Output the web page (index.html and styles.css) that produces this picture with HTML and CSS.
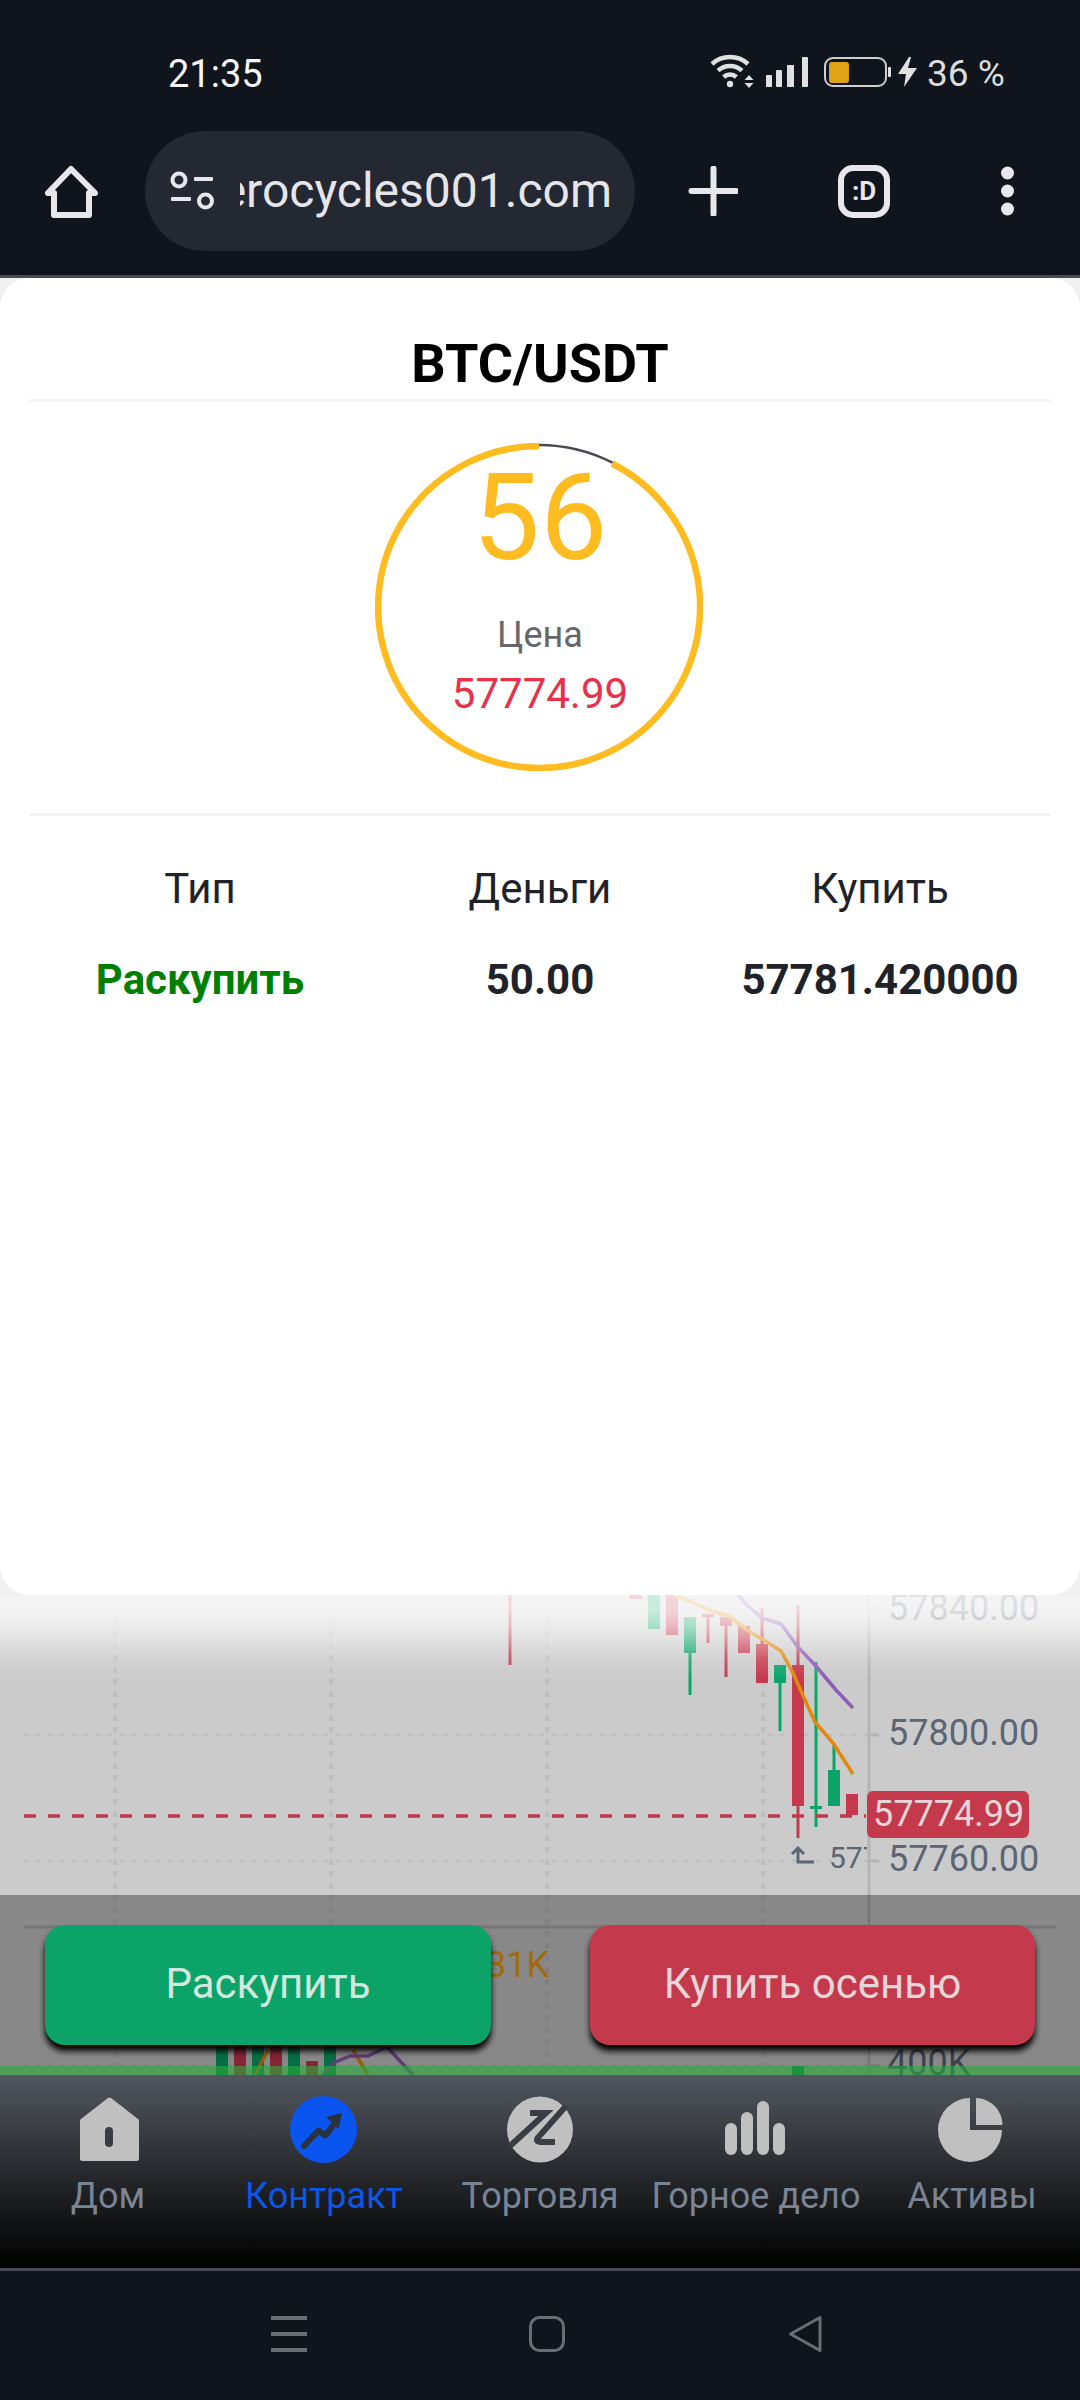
FILE: index.html
```html
<!DOCTYPE html>
<html lang="ru">
<head>
<meta charset="utf-8">
<title>BTC/USDT</title>
<link rel="stylesheet" href="styles.css">
</head>
<body>
<div class="page">
  <header class="topbar">
    <div class="status">
      <span class="time">21:35</span>
      <svg class="status-icons" viewBox="706 52 212 38" width="212" height="38">
        <g class="ic-wifi">
          <path d="M712 64A27 27 0 0 1 748 64"/>
          <path d="M718 70.6A18 18 0 0 1 742 70.6"/>
          <path d="M723.6 77A9.5 9.5 0 0 1 736.4 77"/>
        </g>
        <circle class="ic-fill" cx="730" cy="84" r="3.2"/>
        <path class="ic-fill" d="M749 75l4.5 5h-9zM749 88l4.5-5h-9z"/>
        <rect class="ic-fill" x="766" y="75" width="6" height="12" rx="1"/>
        <rect class="ic-fill" x="776" y="70" width="6" height="17" rx="1"/>
        <rect class="ic-fill" x="787" y="65" width="7" height="22" rx="1"/>
        <rect class="ic-fill" x="802" y="57" width="6" height="30" rx="1"/>
        <rect class="ic-batt" x="825" y="58" width="61" height="28" rx="8"/>
        <rect class="ic-level" x="829" y="62" width="20" height="21" rx="3"/>
        <rect class="ic-fill" x="888" y="67" width="3" height="10" rx="1"/>
        <path class="ic-fill" d="M909 57L898 74H906L904 87L917 68H908L911 57Z"/>
      </svg>
      <span class="batt-text">36 %</span>
    </div>
    <div class="browser">
      <svg class="home-btn" viewBox="43 162 56 57" width="56" height="57">
        <path class="ic-line" d="M71 168L48 192H54V214H89V192H95Z"/>
      </svg>
      <div class="url-pill">
        <svg class="tune" viewBox="168 171 50 42" width="50" height="42">
          <circle class="ic-thin" cx="179" cy="181" r="6.5"/>
          <rect class="ic-light" x="194" y="178" width="19" height="4" rx="1"/>
          <rect class="ic-light" x="171" y="198" width="20" height="4" rx="1"/>
          <circle class="ic-thin" cx="205.500" cy="202" r="6.500"/>
        </svg>
        <div class="url-clip"><span class="url-text">erocycles001.com</span></div>
      </div>
      <svg class="plus-btn" viewBox="688 166 50 50" width="50" height="50">
        <path class="ic-line" d="M691.500 191H736M713.500 168.500V214"/>
      </svg>
      <div class="tab-btn">:D</div>
      <svg class="dots-btn" viewBox="996 164 24 54" width="24" height="54">
        <circle class="ic-light" cx="1007.500" cy="173" r="6.500"/>
        <circle class="ic-light" cx="1007.500" cy="191" r="6.500"/>
        <circle class="ic-light" cx="1007.500" cy="209" r="6.500"/>
      </svg>
    </div>
  </header>

  <main class="stage">
    <section class="modal">
      <h1 class="modal-title">BTC/USDT</h1>
      <div class="gauge-wrap">
        <div class="gauge">
          <svg class="gauge-ring" viewBox="0 0 328 328" width="328" height="328">
            <path class="ring-on" d="M237.100 20.500A161 161 0 1 1 164 3"/>
            <path class="ring-off" d="M164 2A162 162 0 0 1 237.500 19.700"/>
          </svg>
          <div class="count">56</div>
          <div class="price-label">Цена</div>
          <div class="price-value">57774.99</div>
        </div>
      </div>
      <div class="order-grid">
        <div class="order-label">Тип</div>
        <div class="order-label">Деньги</div>
        <div class="order-label">Купить</div>
        <div class="order-value order-type">Раскупить</div>
        <div class="order-value">50.00</div>
        <div class="order-value">57781.420000</div>
      </div>
    </section>

    <section class="chart">
      <svg class="chart-svg" viewBox="0 1595 1080 480" width="1080" height="480">
        <defs><clipPath id="lowclip"><rect x="820" y="1840" width="47" height="40"/></clipPath></defs>
        <g class="grid-h">
          <path d="M24 1609H869M24 1735H869M24 1861H869M24 2066H869"/>
        </g>
        <g class="grid-v">
          <path d="M115 1595V2066M331 1595V2066M547 1595V2066M763 1595V2066"/>
        </g>
        <path class="axis" d="M869 1595V2075"/>
        <path class="axis-tick" d="M869 1609H879M869 1735H879M869 1861H879M869 2066H879"/>
        <path class="sep" d="M24 1927H1056"/>

        <g class="wick-red">
          <path d="M510 1595V1665M726 1617V1677M708 1614V1643M762 1608V1644M798 1605V1838"/>
        </g>
        <g class="wick-green">
          <path d="M690 1653V1695M780 1683V1731M816 1662V1827M834 1743V1770"/>
        </g>
        <g class="body-red">
          <rect x="630" y="1595" width="12" height="4"/>
          <rect x="666" y="1595" width="12" height="40"/>
          <rect x="702" y="1614" width="12" height="3"/>
          <rect x="720" y="1617" width="12" height="9"/>
          <rect x="738" y="1626" width="12" height="27"/>
          <rect x="756" y="1644" width="12" height="39"/>
          <rect x="792" y="1665" width="12" height="141"/>
          <rect x="846" y="1794" width="12" height="21"/>
          <rect x="234" y="2040" width="12" height="35"/>
          <rect x="270" y="2040" width="12" height="35"/>
          <rect x="306" y="2061" width="12" height="14"/>
        </g>
        <g class="body-green">
          <rect x="648" y="1595" width="12" height="34"/>
          <rect x="684" y="1617" width="12" height="36"/>
          <rect x="774" y="1665" width="12" height="18"/>
          <rect x="810" y="1806" width="12" height="3"/>
          <rect x="828" y="1770" width="12" height="36"/>
          <rect x="216" y="2040" width="12" height="35"/>
          <rect x="252" y="2040" width="12" height="35"/>
          <rect x="288" y="2040" width="12" height="35"/>
          <rect x="324" y="2040" width="12" height="35"/>
          <rect x="792" y="2066" width="12" height="9"/>
        </g>

        <path class="dash-price" d="M24 1816H866"/>

        <polyline class="ma-orange" points="674,1595 692,1602 709,1610 729,1616 747,1630 762,1639 781,1651 793,1673 805,1700 815,1722 833,1743 853,1774"/>
        <polyline class="ma-orange" points="268,2050 255,2075"/>
        <polyline class="ma-orange" points="353,2050 368,2075"/>
        <polyline class="ma-purple" points="738,1595 747,1605 762,1618 781,1624 798,1647 815,1665 836,1690 853,1708"/>
        <polyline class="ma-purple" points="323,2075 333,2063 350,2056 368,2056 387,2047 413,2075"/>

        <text class="axis-text" x="888" y="1620">57840.00</text>
        <text class="axis-text" x="888" y="1745">57800.00</text>
        <text class="axis-text" x="888" y="1871">57760.00</text>
        <text class="axis-text" x="887" y="2075">400K</text>
        <text class="vol-text" x="549" y="1977" text-anchor="end">31K</text>

        <rect class="tag" x="867" y="1791" width="162" height="47" rx="6"/>
        <text class="tag-text" x="873" y="1826">57774.99</text>

        <path class="low-mark" d="M798 1848V1862H814M792 1854L798 1848L804 1854"/>
        <g clip-path="url(#lowclip)"><text class="low-text" x="829" y="1868">577</text></g>
      </svg>
      <div class="chart-fade"></div>
      <div class="dock">
        <button class="trade-btn trade-up">Раскупить</button>
        <button class="trade-btn trade-down">Купить осенью</button>
      </div>
    </section>
  </main>

  <nav class="tabbar">
    <div class="tab">
      <svg class="tab-icon" viewBox="73 2095 70 70" width="70" height="70">
        <path class="nav-shape" d="M109.500 2100L136.500 2121V2158.500H82.500V2121Z"/>
        <rect class="nav-cut" x="105" y="2127" width="8" height="20" rx="4"/>
      </svg>
      <span class="tab-label">Дом</span>
    </div>
    <div class="tab tab-active">
      <svg class="tab-icon" viewBox="289 2095 70 70" width="70" height="70">
        <circle class="nav-blue" cx="323.500" cy="2129.500" r="33.500"/>
        <path class="nav-arrow" d="M304 2146L318.500 2130.500L325.500 2135.500L337 2120"/>
        <path class="nav-head" d="M342 2113L326 2117L338.500 2129Z"/>
      </svg>
      <span class="tab-label">Контракт</span>
    </div>
    <div class="tab">
      <svg class="tab-icon" viewBox="505 2095 70 70" width="70" height="70">
        <circle class="nav-grey" cx="540" cy="2129.500" r="33"/>
        <path class="nav-stroke" d="M530 2113H546L510 2146"/>
        <path class="nav-stroke" d="M566 2106L538 2137.500Q535 2142 541 2142H555"/>
      </svg>
      <span class="tab-label">Торговля</span>
    </div>
    <div class="tab">
      <svg class="tab-icon" viewBox="721 2095 70 70" width="70" height="70">
        <rect class="nav-grey" x="725" y="2123" width="12" height="32" rx="6"/>
        <rect class="nav-grey" x="741" y="2112" width="12" height="43" rx="6"/>
        <rect class="nav-grey" x="757" y="2101" width="12" height="54" rx="6"/>
        <rect class="nav-grey" x="773" y="2123" width="12" height="32" rx="6"/>
      </svg>
      <span class="tab-label">Горное дело</span>
    </div>
    <div class="tab">
      <svg class="tab-icon" viewBox="937 2095 70 70" width="70" height="70">
        <path class="nav-grey" d="M970 2098A32 32 0 1 0 1002 2130H970Z"/>
        <path class="nav-grey" d="M976 2098A27 27 0 0 1 1002.500 2125H976Z"/>
      </svg>
      <span class="tab-label">Активы</span>
    </div>
  </nav>

  <footer class="sysbar">
    <svg class="sys-icon sys-menu" viewBox="271 2314 36 40" width="36" height="40">
      <rect class="sys-fill" x="271" y="2316" width="36" height="4"/>
      <rect class="sys-fill" x="271" y="2332" width="36" height="4"/>
      <rect class="sys-fill" x="271" y="2348" width="36" height="4"/>
    </svg>
    <svg class="sys-icon sys-home" viewBox="527 2314 40 40" width="40" height="40">
      <rect class="sys-line" x="530.500" y="2317.500" width="33" height="33" rx="9"/>
    </svg>
    <svg class="sys-icon sys-back" viewBox="787 2314 38 40" width="38" height="40">
      <path class="sys-line" d="M820 2317.500L790.500 2334L820 2350.500Z"/>
    </svg>
  </footer>
</div>
</body>
</html>
```
FILE: styles.css
```css
* { box-sizing: border-box; }
html, body { margin: 0; padding: 0; }
body { width: 1080px; height: 2400px; overflow: hidden; background: #10141c; font-family: Roboto, "Noto Sans", sans-serif; }
.page { width: 1080px; height: 2400px; display: flex; flex-direction: column; }

/* top */
.topbar { height: 278px; background: #10141c; border-bottom: 3px solid #4a4a55; flex: none; }
.status { height: 131px; display: flex; align-items: flex-start; padding: 52px 0 0 168px; }
.time { font-size: 38px; line-height: 38px; color: #f5f5f5; width: 538px; margin-top: 3px; }
.status-icons { display: block; flex: none; }
.batt-text { font-size: 37px; line-height: 38px; color: #dcdcdc; margin-left: 9px; margin-top: 3px; white-space: pre; }
.browser { height: 120px; display: flex; align-items: center; padding-left: 43px; }
.home-btn, .plus-btn, .dots-btn, .tune { display: block; flex: none; }
.url-pill { width: 490px; height: 120px; margin-left: 46px; border-radius: 60px / 60px; background: #242833; display: flex; align-items: center; padding-left: 23px; flex: none; }
.url-clip { width: 372px; margin-left: 22px; overflow: hidden; display: flex; justify-content: flex-end; }
.url-text { font-size: 48px; line-height: 60px; color: #e6e6ea; white-space: nowrap; flex: none; }
.plus-btn { margin-left: 53px; }
.tab-btn { width: 52px; height: 53px; margin-left: 100px; border: 6px solid #e8e8ec; border-radius: 15px; color: #e8e8ec; font-size: 26px; font-weight: 700; line-height: 40px; text-align: center; flex: none; }
.dots-btn { margin-left: 106px; }
.ic-fill { fill: #e0e0e0; }
.ic-wifi path { fill: none; stroke: #e0e0e0; stroke-width: 4.5; }
.ic-batt { fill: none; stroke: #cfcfcf; stroke-width: 2; }
.ic-level { fill: #e0a316; }
.ic-line { fill: none; stroke: #e8e8ec; stroke-width: 6; stroke-linejoin: round; stroke-linecap: round; }
.ic-thin { fill: none; stroke: #e8e8ec; stroke-width: 4; }
.ic-light { fill: #e8e8ec; }

/* stage */
.stage { flex: none; height: 1797px; background: #f1f1f1; display: flex; flex-direction: column; }
.modal { flex: none; height: 1317px; background: #fff; border-radius: 30px; padding: 0 30px; }
.modal-title { margin: 0; padding: 59px 0 0; height: 124px; font: 700 54px/54px Roboto, sans-serif; color: #000; text-align: center; border-bottom: 3px solid #f3f3f3; }
.gauge-wrap { height: 414px; padding-top: 41px; border-bottom: 3px solid #f3f3f3; display: flex; justify-content: center; }
.gauge { position: relative; width: 328px; height: 328px; display: flex; flex-direction: column; align-items: center; padding-top: 15px; }
.gauge-ring { position: absolute; left: -1px; top: 0; }
.ring-on { fill: none; stroke: #febc20; stroke-width: 6.5; }
.ring-off { fill: none; stroke: #4a4a55; stroke-width: 2.5; }
.count { font-size: 120px; line-height: 120px; color: #febc20; }
.price-label { font-size: 36px; line-height: 40px; color: #666; margin-top: 37px; }
.price-value { font-size: 42px; line-height: 44px; color: #e8304a; margin-top: 17px; }
.order-grid { display: grid; grid-template-columns: repeat(3, 1fr); padding-top: 48px; row-gap: 41px; text-align: center; color: #1f2329; }
.order-label { font-size: 42px; line-height: 50px; }
.order-value { font-size: 42px; line-height: 50px; font-weight: 700; }
.order-type { color: #008000; }

/* chart */
.chart { position: relative; flex: none; height: 480px; background: #cbcbcb; overflow: hidden; }
.chart-svg { display: block; }
.chart-fade { position: absolute; left: 0; right: 0; top: 0; height: 85px; background: linear-gradient(rgba(255,255,255,.8) 0, rgba(255,255,255,.78) 15px, rgba(255,255,255,.63) 32px, rgba(255,255,255,.15) 65px, rgba(255,255,255,0) 85px); }
.grid-h path { fill: none; stroke: #bfbfbf; stroke-width: 3; stroke-dasharray: 4 8; }
.grid-v path { fill: none; stroke: #bfbfbf; stroke-width: 4; stroke-dasharray: 6 6; }
.axis { fill: none; stroke: #b4b4b4; stroke-width: 3; }
.axis-tick { fill: none; stroke: #b4b4b4; stroke-width: 3; }
.sep { fill: none; stroke: #b0b0b0; stroke-width: 3; }
.wick-red path { fill: none; stroke: #c5394c; stroke-width: 3; }
.wick-green path { fill: none; stroke: #0ba368; stroke-width: 3; }
.body-red rect { fill: #c5394c; }
.body-green rect { fill: #0ba368; }
.dash-price { fill: none; stroke: #c0394c; stroke-width: 3.5; stroke-dasharray: 12 12; }
.ma-orange { fill: none; stroke: #df8a0c; stroke-width: 3.5; stroke-linejoin: round; }
.ma-purple { fill: none; stroke: #8e5bb5; stroke-width: 3.5; stroke-linejoin: round; }
.axis-text { font: 36px Roboto, sans-serif; fill: #5b6573; }
.vol-text { font: 36px Roboto, sans-serif; fill: #ef9f14; }
.tag { fill: #c5394c; }
.tag-text { font: 36px Roboto, sans-serif; fill: #e6d6d9; }
.low-mark { fill: none; stroke: #5b6573; stroke-width: 3; }
.low-text { font: 30px Roboto, sans-serif; fill: #5b6573; }

.dock { position: absolute; left: 0; right: 0; bottom: 0; height: 180px; background: rgba(0,0,0,.33); border-bottom: 9px solid rgba(41,173,63,.6); padding: 30px 45px 0; display: flex; justify-content: space-between; align-items: flex-start; }
.trade-btn { height: 120px; border: 0; border-radius: 20px; font: 42px Roboto, sans-serif; box-shadow: 0 6px 6px #000; padding: 0 0 3px; }
.trade-up { width: 446px; background: #0ba368; color: #d2e7dd; }
.trade-down { width: 445px; background: #c5394c; color: #e6d6d9; }

/* tab bar */
.tabbar { flex: none; height: 193px; display: grid; grid-template-columns: repeat(5, 216px); background: linear-gradient(#52565e, #383b41 30%, #1f2124 60%, #000); padding-top: 20px; }
.tab { display: flex; flex-direction: column; align-items: center; }
.tab-icon { display: block; }
.tab-label { font-size: 36px; line-height: 40px; margin-top: 11px; color: #7a8494; white-space: nowrap; }
.tab-active .tab-label { color: #0b57e8; }
.nav-shape { fill: #c0c0c0; stroke: #c0c0c0; stroke-width: 5; stroke-linejoin: round; }
.nav-cut { fill: #393c42; }
.nav-blue { fill: #0a55f0; }
.nav-arrow { fill: none; stroke: #2a3240; stroke-width: 6; stroke-linecap: round; stroke-linejoin: round; }
.nav-head { fill: #2a3240; }
.nav-grey { fill: #c0c0c0; }
.nav-stroke { fill: none; stroke: #3a3d44; stroke-width: 6; }

/* system bar */
.sysbar { flex: none; height: 132px; background: #10141c; border-top: 3px solid #4a4a55; display: flex; padding: 43px 0 0 271px; }
.sys-icon { display: block; flex: none; }
.sys-home { margin-left: 220px; }
.sys-back { margin-left: 220px; }
.sys-fill { fill: #6a6d73; }
.sys-line { fill: none; stroke: #6a6d73; stroke-width: 3; stroke-linejoin: round; }
```
